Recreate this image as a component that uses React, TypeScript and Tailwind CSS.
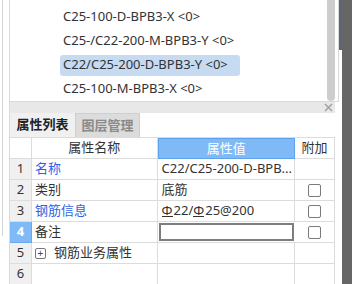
import React from 'react';

const items = [
  'C25-100-D-BPB3-X <0>',
  'C25-/C22-200-M-BPB3-Y <0>',
  'C22/C25-200-D-BPB3-Y <0>',
  'C25-100-M-BPB3-X <0>',
];

function Check() {
  return <div className="w-[13px] h-[13px] rounded-[2px] border border-[#7a7a7a] bg-white" />;
}

function Steel() {
  return <span className="inline-block border-b border-[#333] leading-[11px] h-[12px] mr-[1px]">Φ</span>;
}

type Row = {
  n: string;
  name: React.ReactNode;
  blue?: boolean;
  value?: React.ReactNode;
  check?: boolean;
  active?: boolean;
};

const rows: Row[] = [
  { n: '1', name: '名称', blue: true, value: 'C22/C25-200-D-BPB...' },
  { n: '2', name: '类别', value: '底筋', check: true },
  {
    n: '3',
    name: '钢筋信息',
    blue: true,
    value: (
      <span>
        <Steel />22/<Steel />25@200
      </span>
    ),
    check: true,
  },
  { n: '4', name: '备注', check: true, active: true },
  {
    n: '5',
    name: (
      <span className="flex items-center">
        <span className="w-[11px] h-[11px] border border-[#777] rounded-[2px] flex items-center justify-center text-[10px] leading-none text-[#444] mr-[8px]">+</span>
        钢筋业务属性
      </span>
    ),
  },
  { n: '6', name: '' },
];

export default function App() {
  return (
    <div
      className="w-[352px] h-[284px] overflow-hidden flex bg-white text-[12px] text-[#333]"
      style={{ fontFamily: '"Noto Sans", "Noto Sans CJK SC", sans-serif' }}
    >
      {/* left gutter */}
      <div className="w-[2px]" />
      <div className="w-px h-[236px] bg-[#d4d4d4]" />
      <div className="w-[6px]" />

      {/* main column */}
      <div className="w-[330px] flex flex-col">
        {/* list panel */}
        <div className="h-[117px] border-l border-r border-b border-[#d9d9d9] flex">
          <div className="flex-1 pt-[5px] pl-[50px] text-[13px]">
            {items.map((t, i) => (
              <div key={t} className="h-[24px] flex items-center">
                <div
                  className={
                    i === 2
                      ? 'w-[180px] h-[21px] rounded-[3px] bg-[#c6dbf1] flex items-center pl-[3px] whitespace-pre'
                      : 'h-[21px] flex items-center pl-[3px] whitespace-pre'
                  }
                >
                  {t}
                </div>
              </div>
            ))}
          </div>
          <div className="w-[8px] h-[101px] rounded-b-full bg-[#cdcdcd] mr-[3px]" />
        </div>

        <div className="h-[3px]" />

        {/* property panel */}
        <div className="w-[326px] border-l border-[#d9d9d9] flex flex-col">
          <div className="h-[11px] bg-[#e8e8e8] flex items-center justify-end pr-[2px]">
            <svg width="9" height="9" viewBox="0 0 9 9">
              <path d="M1 1L8 8M8 1L1 8" stroke="#9a9a9a" strokeWidth="1.2" />
            </svg>
          </div>
          <div className="h-[24px] flex bg-white">
            <div className="w-[65px] bg-[#f0f0f0] flex items-center justify-center font-bold text-[13px] text-[#222]">
              属性列表
            </div>
            <div className="w-[65px] bg-[#dcdcdc] border-l border-r border-t border-[#cfcfcf] flex items-center justify-center font-bold text-[13px] text-[#8a8a8a]">
              图层管理
            </div>
          </div>

          {/* header */}
          <div className="h-[22px] flex border-t border-[#dcdcdc]">
            <div className="w-[22px] border-r border-b border-[#dcdcdc]" />
            <div className="w-[126px] border-r border-b border-[#dcdcdc] flex items-center justify-center text-[13px]">属性名称</div>
            <div className="w-[138px] bg-[#7fb9f6] border border-[#5fa2ec] flex items-center justify-center text-white text-[13px]">属性值</div>
            <div className="w-[40px] border-r border-b border-[#dcdcdc] flex items-center justify-center text-[13px]">附加</div>
          </div>

          {rows.map((r) => (
            <div key={r.n} className="h-[21px] flex shrink-0">
              <div
                className={
                  r.active
                    ? 'w-[22px] bg-[#7fb9f6] border-r border-b border-[#6aa8ee] flex items-center justify-center text-white font-bold text-[13px]'
                    : 'w-[22px] bg-[#f0f0f0] border-r border-b border-[#dcdcdc] flex items-center justify-center text-[13px]'
                }
              >
                {r.n}
              </div>
              <div
                className={
                  'w-[126px] border-r border-b border-[#dcdcdc] flex items-center pl-[3px] text-[13px] ' +
                  (r.blue ? 'text-[#2f63e6]' : '')
                }
              >
                {r.name}
              </div>
              {r.active ? (
                <div className="w-[138px] border-b border-[#dcdcdc] p-[1px]">
                  <div className="w-full h-full border-2 border-[#7d7d7d] bg-white" />
                </div>
              ) : (
                <div className="w-[138px] border-r border-b border-[#dcdcdc] flex items-center pl-[4px] text-[13px] whitespace-nowrap overflow-hidden">
                  {r.value}
                </div>
              )}
              <div className="w-[40px] border-r border-b border-[#dcdcdc] flex items-center justify-center">
                {r.check ? <Check /> : null}
              </div>
            </div>
          ))}
        </div>
      </div>

      {/* right edge */}
      <div className="w-[3px] flex flex-col">
        <div className="h-[50px] bg-[#5b6776]" />
      </div>
      <div className="w-[10px] bg-[#666666]" />
    </div>
  );
}
